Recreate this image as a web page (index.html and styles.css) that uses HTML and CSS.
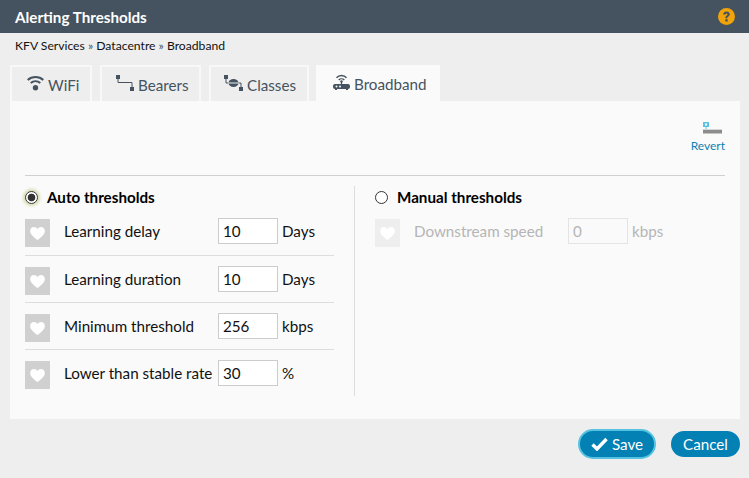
FILE: index.html
```html
<!DOCTYPE html>
<html lang="en">
<head>
<meta charset="utf-8">
<title>Alerting Thresholds</title>
<link rel="stylesheet" href="styles.css">
</head>
<body>
<header class="titlebar">
  <h1 class="title">Alerting Thresholds</h1>
  <svg class="help" width="17" height="17" viewBox="0 0 17 17"><circle cx="8.5" cy="8.5" r="8.5" fill="#f0a30a"/><path d="M5.2 6.600c0-2 1.500-3.200 3.400-3.200s3.200 1.100 3.200 2.800c0 2.200-2.500 2.200-2.500 4.100H7.300c0-2.700 2.200-2.800 2.200-3.900 0-.6-.3-1-.9-1-.7 0-1 .5-1 1.200z" fill="#44535f"/><rect x="7.300" y="11.200" width="2.400" height="2.300" fill="#44535f"/></svg>
</header>
<nav class="crumbs">KFV Services <span class="sep">»</span> Datacentre <span class="sep">»</span> Broadband</nav>
<div class="tabs">
  <div class="tab tab-wifi">
    <svg class="tab-icon" width="17" height="16" viewBox="0 0 17 16"><path d="M.7 5C5 1 12 1 16.300 5" fill="none" stroke="#44535f" stroke-width="2"/><path d="M3.700 8c2.800-2.400 6.800-2.400 9.600 0" fill="none" stroke="#44535f" stroke-width="2"/><circle cx="8.500" cy="12.700" r="2.700" fill="#44535f"/></svg>
    WiFi
  </div>
  <div class="tab tab-bearers">
    <svg class="tab-icon" width="18" height="16" viewBox="0 0 18 16"><rect x="0" y="0" width="4" height="4" fill="#44535f"/><rect x="14" y="12" width="4" height="4" fill="#44535f"/><path d="M2 4v3.500h14V12" fill="none" stroke="#44535f" stroke-width="1"/></svg>
    Bearers
  </div>
  <div class="tab tab-classes">
    <svg class="tab-icon" width="19" height="16" viewBox="0 0 19 16"><rect x="0" y="0" width="4" height="4" fill="#44535f"/><rect x="15" y="12" width="4" height="4" fill="#44535f"/><path d="M2 4v4h15v4" fill="none" stroke="#44535f" stroke-width="1"/><ellipse cx="9.500" cy="8" rx="5" ry="4" fill="#44535f"/><rect x="4" y="7.500" width="11" height="1" fill="#eeeeee"/></svg>
    Classes
  </div>
  <div class="tab tab-active">
    <svg class="tab-icon" width="17" height="16" viewBox="0 0 17 16"><path d="M3.500 3.700C6 .7 11 .7 13.500 3.700" fill="none" stroke="#44535f" stroke-width="1.400"/><path d="M5.700 6c1.500-1.500 4.100-1.500 5.600 0" fill="none" stroke="#44535f" stroke-width="1.400"/><circle cx="8.500" cy="7.500" r="1.200" fill="#44535f"/><rect x="7.900" y="7.500" width="1.200" height="3.500" fill="#44535f"/><rect x="0" y="10" width="17" height="5" rx="2" fill="#44535f"/><rect x="2" y="15" width="2" height="1" fill="#44535f"/><rect x="13" y="15" width="2" height="1" fill="#44535f"/><circle cx="3.500" cy="12.500" r="1" fill="#fafafa"/><circle cx="7" cy="12.500" r="1" fill="#fafafa"/></svg>
    Broadband
  </div>
</div>
<main class="panel">
  <div class="toolbar">
    <div class="revert">
      <svg class="revert-icon" width="19" height="12" viewBox="0 0 19 12"><rect x="0" y="0" width="6" height="5" fill="#5cc3e0"/><rect x="2" y="1.500" width="2" height="2" fill="#fff"/><rect x="2.500" y="5" width="1" height="2" fill="#5cc3e0"/><rect x="0" y="7" width="19" height="1" fill="#d6d6d6"/><rect x="0" y="8" width="19" height="3.500" fill="#8c8c8c"/></svg>
      <span>Revert</span>
    </div>
  </div>
  <div class="columns">
    <section class="col col-auto">
      <label class="mode"><span class="radio radio-on"></span>Auto thresholds</label>
      <div class="row">
        <span class="heart"><svg width="15" height="13" viewBox="0 0 18 16"><path d="M9 16C4 12 0 9 0 4.800 0 2 2.200 0 4.700 0 6.500 0 8.100 1 9 2.500 9.900 1 11.500 0 13.300 0 15.800 0 18 2 18 4.800 18 9 14 12 9 16z" fill="#fff"/></svg></span>
        <span class="name">Learning delay</span><span class="field">10</span><span class="unit">Days</span>
      </div>
      <div class="row">
        <span class="heart"><svg width="15" height="13" viewBox="0 0 18 16"><path d="M9 16C4 12 0 9 0 4.800 0 2 2.200 0 4.700 0 6.500 0 8.100 1 9 2.500 9.900 1 11.500 0 13.300 0 15.800 0 18 2 18 4.800 18 9 14 12 9 16z" fill="#fff"/></svg></span>
        <span class="name">Learning duration</span><span class="field">10</span><span class="unit">Days</span>
      </div>
      <div class="row">
        <span class="heart"><svg width="15" height="13" viewBox="0 0 18 16"><path d="M9 16C4 12 0 9 0 4.800 0 2 2.200 0 4.700 0 6.500 0 8.100 1 9 2.500 9.900 1 11.500 0 13.300 0 15.800 0 18 2 18 4.800 18 9 14 12 9 16z" fill="#fff"/></svg></span>
        <span class="name">Minimum threshold</span><span class="field">256</span><span class="unit">kbps</span>
      </div>
      <div class="row">
        <span class="heart"><svg width="15" height="13" viewBox="0 0 18 16"><path d="M9 16C4 12 0 9 0 4.800 0 2 2.200 0 4.700 0 6.500 0 8.100 1 9 2.500 9.900 1 11.500 0 13.300 0 15.800 0 18 2 18 4.800 18 9 14 12 9 16z" fill="#fff"/></svg></span>
        <span class="name">Lower than stable rate</span><span class="field">30</span><span class="unit">%</span>
      </div>
    </section>
    <section class="col col-manual">
      <label class="mode"><span class="radio"></span>Manual thresholds</label>
      <div class="row row-disabled">
        <span class="heart"><svg width="15" height="13" viewBox="0 0 18 16"><path d="M9 16C4 12 0 9 0 4.800 0 2 2.200 0 4.700 0 6.500 0 8.100 1 9 2.500 9.900 1 11.500 0 13.300 0 15.800 0 18 2 18 4.800 18 9 14 12 9 16z" fill="#fff"/></svg></span>
        <span class="name">Downstream speed</span><span class="field">0</span><span class="unit">kbps</span>
      </div>
    </section>
  </div>
</main>
<footer class="actions">
  <button class="btn btn-save" type="button"><svg width="17" height="14" viewBox="0 0 17 14"><path d="M1.500 7.500 6 12 15.500 2" fill="none" stroke="#fff" stroke-width="3.400"/></svg>Save</button>
  <button class="btn btn-cancel" type="button">Cancel</button>
</footer>
</body>
</html>
```
FILE: styles.css
```css
* { box-sizing: border-box; }
html, body { margin: 0; height: 100%; }
body {
  background: #eeeeee;
  font-family: Lato, "Open Sans", sans-serif;
  font-size: 15.2px;
  color: #111;
  overflow: hidden;
}
.titlebar {
  height: 33px;
  background: #44535f;
  display: flex;
  align-items: center;
  justify-content: space-between;
  padding: 0 14px 0 15px;
}
.title { margin: 0; font-size: 15.2px; font-weight: 700; color: #fff; }
.crumbs { height: 32px; padding: 5px 0 0 15px; font-size: 12.17px; line-height: 15px; color: #111; }
.sep { color: #44535f; }
.tabs { display: flex; padding-left: 10px; height: 36px; }
.tab {
  display: flex;
  align-items: center;
  gap: 4px;
  border: 2px solid #f8f8f8;
  border-bottom: 0;
  color: #44535f;
  padding-top: 2px;
  margin-right: 8px;
}
.tab-wifi { width: 82px; padding-left: 15px; }
.tab-bearers { width: 101px; padding-left: 14px; }
.tab-classes { width: 100px; margin-right: 7px; padding-left: 13px; }
.tab-active { width: 124px; background: #fafafa; border: 0; padding-left: 17px; }
.tab-icon { margin-top: -4px; }
.panel { margin: 0 9px 0 10px; height: 318px; background: #fafafa; padding: 0 15px; }
.toolbar { height: 75px; border-bottom: 1px solid #d0d0d0; display: flex; justify-content: flex-end; padding-top: 21px; }
.revert { display: flex; flex-direction: column; align-items: center; gap: 4px; font-size: 12px; line-height: 15px; color: #0f82b4; height: 31px; }
.revert-icon { display: block; margin-left: 9px; }
.columns { display: flex; padding-top: 10px; }
.col-auto { width: 330px; height: 210px; border-right: 1px solid #ddd; padding-right: 20px; }
.col-manual { padding-left: 20px; flex: 1; }
.mode { display: flex; align-items: center; height: 22px; margin-bottom: 1px; font-weight: 700; color: #000; }
.radio {
  width: 13px; height: 13px; border-radius: 50%;
  border: 1px solid #333; background: #fff; margin-right: 9px; flex: none;
}
.radio-on {
  background: radial-gradient(circle, #333 0 3.500px, #fff 4.200px);
  box-shadow: 0 0 3px 2px #d5dcb0;
}
.row { display: flex; align-items: flex-start; height: 47px; padding-top: 10px; border-bottom: 1px solid #ddd; }
.row:first-of-type { padding-top: 9px; }
.row:last-child { border-bottom: 0; }
.row-disabled { color: #b5b5b5; }
.heart {
  width: 25px; height: 28px; margin-top: 1px; background: #d0d0d0;
  display: flex; align-items: center; justify-content: center; flex: none;
}
.row-disabled .heart { background: #eeeeee; }
.name { width: 168px; padding-left: 14px; line-height: 26px; flex: none; white-space: nowrap; }
.field {
  width: 60px; height: 26px; border: 1px solid #ccc; background: #fff;
  padding-left: 4px; line-height: 24px; flex: none;
}
.row-disabled .field { border-color: #e4e4e4; background: #fafafa; }
.unit { margin-left: 4px; line-height: 26px; }
.actions { display: flex; justify-content: flex-end; align-items: center; padding: 10px 9px 0 0; gap: 15px; }
.btn {
  font: 15.2px Lato, sans-serif; color: #fff; background: #0380b4;
  border: 0; border-radius: 15px; height: 26px; display: flex; align-items: center; justify-content: center;
}
.btn-save { width: 78px; height: 30px; gap: 4px; border: 2px solid #57c2e0; }
.btn-cancel { width: 69px; }
```
